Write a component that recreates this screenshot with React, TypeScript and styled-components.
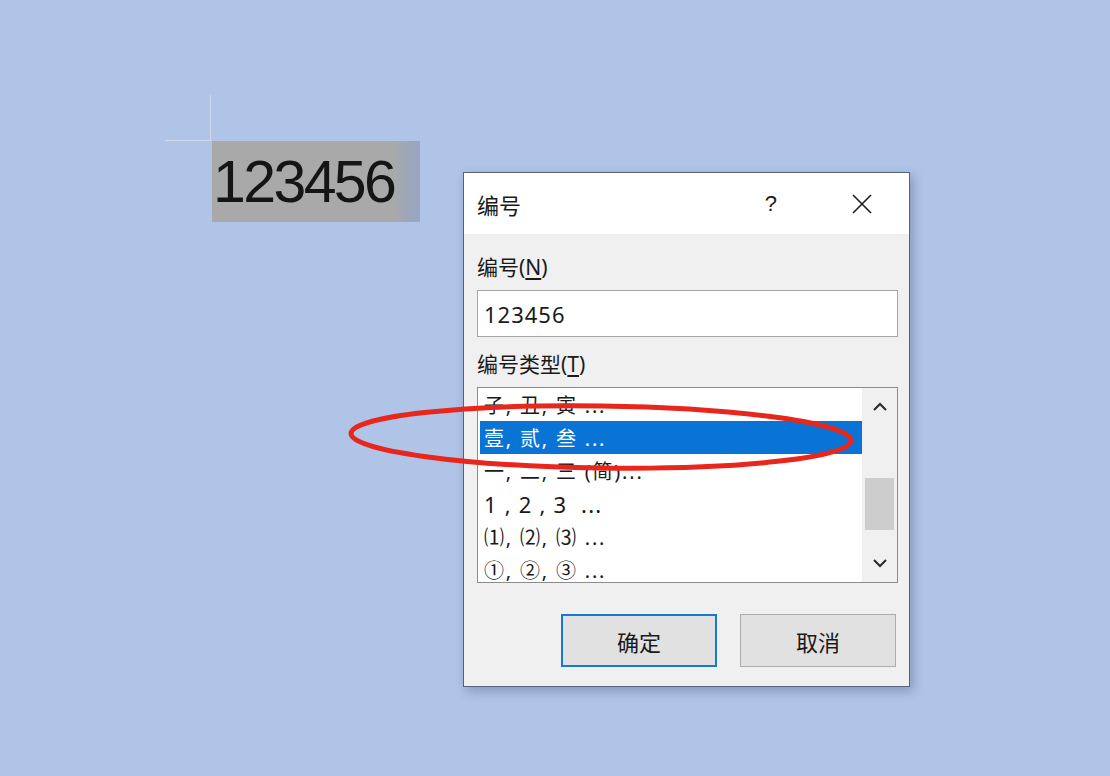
import styled, { createGlobalStyle } from "styled-components";

const GlobalStyle = createGlobalStyle`
  html, body {
    margin: 0;
    padding: 0;
    background: #b0c4e8;
  }
  * {
    box-sizing: border-box;
  }
`;

const CJK = `"Noto Sans", "Noto Sans CJK SC", sans-serif`;

const items = [
  { text: "子, 丑, 寅 ..." },
  { text: "壹, 贰, 叁 ..." },
  { text: "一, 二, 三 (简)..." },
  { text: "1 , 2 , 3  ...", wide: true },
  { text: "⑴, ⑵, ⑶ ..." },
  { text: "①, ②, ③ ..." },
];

const CloseIcon = () => (
  <svg width="22" height="22" viewBox="0 0 22 22">
    <path d="M2 2 L20 20 M20 2 L2 20" stroke="#1e1e1e" strokeWidth="1.6" fill="none" />
  </svg>
);

const Chevron = ({ up }: { up?: boolean }) => (
  <svg width="16" height="10" viewBox="0 0 16 10">
    <path
      d={up ? "M2 8 L8 2 L14 8" : "M2 2 L8 8 L14 2"}
      stroke="#2a2a2a"
      strokeWidth="2"
      fill="none"
    />
  </svg>
);

const App = () => {
  return (
    <>
      <GlobalStyle />
      <Page>
        <DocArea>
          <Crosshair />
          <Selection>
            <BigNumber>123456</BigNumber>
            <SelectionFade />
          </Selection>
        </DocArea>

        <Dialog>
          <TitleBar>
            <Title>编号</Title>
            <TitleActions>
              <Help>?</Help>
              <CloseBtn>
                <CloseIcon />
              </CloseBtn>
            </TitleActions>
          </TitleBar>

          <Body>
            <Label>
              编号(<u>N</u>)
            </Label>
            <Input>123456</Input>
            <Label $gap={13}>
              编号类型(<u>T</u>)
            </Label>
            <ListBox>
              <Rows>
                {items.map((item, i) => (
                  <Row key={item.text} $selected={i === 1} $wide={item.wide}>
                    {item.text}
                  </Row>
                ))}
              </Rows>
              <ScrollBar>
                <ArrowBox>
                  <Chevron up />
                </ArrowBox>
                <Track>
                  <Thumb />
                </Track>
                <ArrowBox>
                  <Chevron />
                </ArrowBox>
              </ScrollBar>
            </ListBox>
            <ButtonRow>
              <Button $primary>确定</Button>
              <Button>取消</Button>
            </ButtonRow>
          </Body>
        </Dialog>

        <Ellipse width="520" height="80" viewBox="0 0 520 80">
          <ellipse cx="258" cy="38" rx="250" ry="31" fill="none" stroke="#e8261c" strokeWidth="5" />
        </Ellipse>
      </Page>
    </>
  );
};

export default App;

const Page = styled.div`
  position: relative;
  width: 1110px;
  height: 776px;
  overflow: hidden;
  background: #b0c4e8;
  display: flex;
  align-items: flex-start;
  padding: 95px 0 0 165px;
`;

const DocArea = styled.div`
  width: 298px;
  display: flex;
  flex-direction: column;
`;

const Crosshair = styled.div`
  width: 46px;
  height: 46px;
  border-right: 1px solid #d3d9e4;
  border-bottom: 1px solid #d3d9e4;
`;

const Selection = styled.div`
  position: relative;
  margin-left: 47px;
  width: 208px;
  height: 81px;
  background: #a9a9a9;
  display: flex;
  align-items: center;
  padding-left: 1px;
`;

const SelectionFade = styled.div`
  position: absolute;
  right: 0;
  top: 0;
  bottom: 0;
  width: 26px;
  background: linear-gradient(90deg, #a9a9a9, #9ba6bd 60%, #9aa6c0);
`;

const BigNumber = styled.span`
  position: relative;
  z-index: 1;
  font-family: "Liberation Sans", Arial, sans-serif;
  font-size: 59px;
  letter-spacing: -2.6px;
  color: #151515;
  line-height: 1;
  margin-top: 2px;
`;

const Dialog = styled.div`
  margin-top: 77px;
  width: 447px;
  height: 515px;
  border: 1px solid #56627a;
  background: #f0f0f0;
  box-shadow: 3px 4px 10px rgba(40, 50, 80, 0.3);
  display: flex;
  flex-direction: column;
`;

const TitleBar = styled.div`
  height: 61px;
  background: #ffffff;
  display: flex;
  align-items: center;
  justify-content: space-between;
  padding: 0 36px 0 13px;
`;

const Title = styled.span`
  font-family: ${CJK};
  font-size: 22px;
  color: #1a1a1a;
`;

const TitleActions = styled.div`
  display: flex;
  align-items: center;
  gap: 74px;
`;

const Help = styled.span`
  font-family: "Liberation Sans", Arial, sans-serif;
  font-size: 22px;
  color: #1a1a1a;
`;

const CloseBtn = styled.span`
  display: flex;
  align-items: center;
`;

const Body = styled.div`
  flex: 1;
  display: flex;
  flex-direction: column;
  padding: 19px 10px 0 13px;
`;

const Label = styled.div<{ $gap?: number }>`
  margin-top: ${({ $gap }) => ($gap ? `${$gap}px` : "0")};
  font-family: ${CJK};
  font-size: 21px;
  line-height: 29px;
  color: #1a1a1a;

  u {
    text-underline-offset: 3px;
  }
`;

const Input = styled.div`
  margin-top: 8px;
  width: 421px;
  height: 47px;
  background: #ffffff;
  border: 1px solid #a5a5a5;
  display: flex;
  align-items: center;
  padding-left: 6px;
  font-family: "Noto Sans", sans-serif;
  font-size: 22px;
  letter-spacing: 1px;
  color: #1a1a1a;
`;

const ListBox = styled.div`
  margin-top: 8px;
  width: 421px;
  height: 196px;
  border: 1px solid #8c8c8c;
  background: #ffffff;
  display: flex;
  overflow: hidden;
`;

const Rows = styled.div`
  flex: 1;
  padding: 0 0 0 2px;
  display: flex;
  flex-direction: column;
`;

const Row = styled.div<{ $selected?: boolean; $wide?: boolean }>`
  height: 33px;
  flex-shrink: 0;
  display: flex;
  align-items: center;
  padding-left: 4px;
  font-family: ${CJK};
  font-size: ${({ $wide }) => ($wide ? "22px" : "20px")};
  letter-spacing: ${({ $wide }) => ($wide ? "1.2px" : "1.8px")};
  white-space: pre;
  color: ${({ $selected }) => ($selected ? "#ffffff" : "#1a1a1a")};
  background: ${({ $selected }) => ($selected ? "#0a74d6" : "transparent")};
`;

const ScrollBar = styled.div`
  width: 35px;
  background: #f0f0f0;
  display: flex;
  flex-direction: column;
`;

const ArrowBox = styled.div`
  height: 38px;
  display: flex;
  align-items: center;
  justify-content: center;
`;

const Track = styled.div`
  flex: 1;
  padding: 52px 3px 0 3px;
`;

const Thumb = styled.div`
  height: 52px;
  background: #cdcdcd;
`;

const ButtonRow = styled.div`
  margin-top: 31px;
  width: 421px;
  display: flex;
  justify-content: flex-end;
  gap: 23px;
  padding-right: 2px;
`;

const Button = styled.div<{ $primary?: boolean }>`
  width: 156px;
  height: 53px;
  background: #e1e1e1;
  border: ${({ $primary }) => ($primary ? "2px solid #1a78d4" : "1px solid #adadad")};
  display: flex;
  align-items: center;
  justify-content: center;
  font-family: ${CJK};
  font-size: 22px;
  color: #1a1a1a;
`;

const Ellipse = styled.svg`
  position: absolute;
  left: 343px;
  top: 399px;
  transform: rotate(0.8deg);
  pointer-events: none;
`;
